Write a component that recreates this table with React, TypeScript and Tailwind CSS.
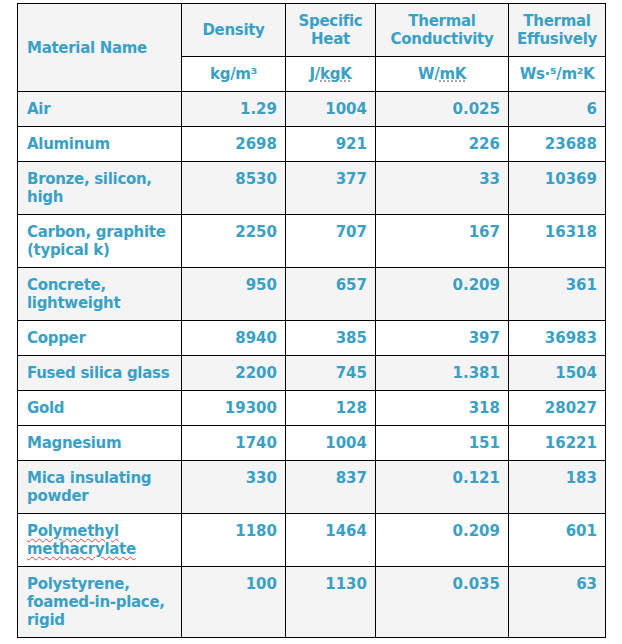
import React from 'react';

type Row = { name: React.ReactNode; density: string; heat: string; cond: string; eff: string; gray: boolean };

const rows: Row[] = [
  { name: 'Air', density: '1.29', heat: '1004', cond: '0.025', eff: '6', gray: true },
  { name: 'Aluminum', density: '2698', heat: '921', cond: '226', eff: '23688', gray: false },
  { name: <>Bronze, silicon,<br />high</>, density: '8530', heat: '377', cond: '33', eff: '10369', gray: true },
  { name: <>Carbon, graphite<br />(typical k)</>, density: '2250', heat: '707', cond: '167', eff: '16318', gray: false },
  { name: <>Concrete,<br />lightweight</>, density: '950', heat: '657', cond: '0.209', eff: '361', gray: true },
  { name: 'Copper', density: '8940', heat: '385', cond: '397', eff: '36983', gray: false },
  { name: 'Fused silica glass', density: '2200', heat: '745', cond: '1.381', eff: '1504', gray: true },
  { name: 'Gold', density: '19300', heat: '128', cond: '318', eff: '28027', gray: false },
  { name: 'Magnesium', density: '1740', heat: '1004', cond: '151', eff: '16221', gray: false },
  { name: <>Mica insulating<br />powder</>, density: '330', heat: '837', cond: '0.121', eff: '183', gray: true },
  {
    name: (
      <span className="underline decoration-wavy decoration-[#e04040] decoration-1 underline-offset-2">
        Polymethyl<br />methacrylate
      </span>
    ),
    density: '1180', heat: '1464', cond: '0.209', eff: '601', gray: false,
  },
  { name: <>Polystyrene,<br />foamed-in-place,<br />rigid</>, density: '100', heat: '1130', cond: '0.035', eff: '63', gray: true },
];

const cell = 'border border-black px-[8px] pt-[8px] pb-[8px] align-top';
const head = 'border border-black px-0 pt-[8px] pb-[8px] text-center tracking-[-0.3px]';

export default function App() {
  return (
    <div className="min-h-screen bg-white pt-[3px] pl-[17px]">
      <table
        className="table-fixed border-collapse text-[#3aa0c4] font-bold text-[15px] leading-[18px]"
        style={{ fontFamily: '"DejaVu Sans", Verdana, sans-serif' }}
      >
        <colgroup>
          <col className="w-[164px]" />
          <col className="w-[104px]" />
          <col className="w-[90px]" />
          <col className="w-[133px]" />
          <col className="w-[97px]" />
        </colgroup>
        <thead>
          <tr className="bg-[#f4f4f4]">
            <th rowSpan={2} className="border border-black px-[9px] text-left align-middle tracking-[-0.3px]">
              Material Name
            </th>
            <th className={`${head} h-[53px] align-middle`}>Density</th>
            <th className={head}>Specific<br />Heat</th>
            <th className={head}>Thermal<br />Conductivity</th>
            <th className={head}>Thermal<br />Effusively</th>
          </tr>
          <tr className="bg-white">
            <th className={head}>kg/m³</th>
            <th className={head}>
              J/<span className="underline decoration-dotted decoration-[#888] underline-offset-2">kgK</span>
            </th>
            <th className={head}>
              W/<span className="underline decoration-dotted decoration-[#888] underline-offset-2">mK</span>
            </th>
            <th className={head}>Ws·⁵/m²K</th>
          </tr>
        </thead>
        <tbody>
          {rows.map((r, i) => (
            <tr key={i} className={r.gray ? 'bg-[#f4f4f4]' : 'bg-white'}>
              <td className={`${cell} pl-[9px] pr-0 text-left whitespace-nowrap tracking-[-0.3px]`}>{r.name}</td>
              <td className={`${cell} text-right`}>{r.density}</td>
              <td className={`${cell} text-right`}>{r.heat}</td>
              <td className={`${cell} text-right`}>{r.cond}</td>
              <td className={`${cell} text-right`}>{r.eff}</td>
            </tr>
          ))}
        </tbody>
      </table>
    </div>
  );
}
